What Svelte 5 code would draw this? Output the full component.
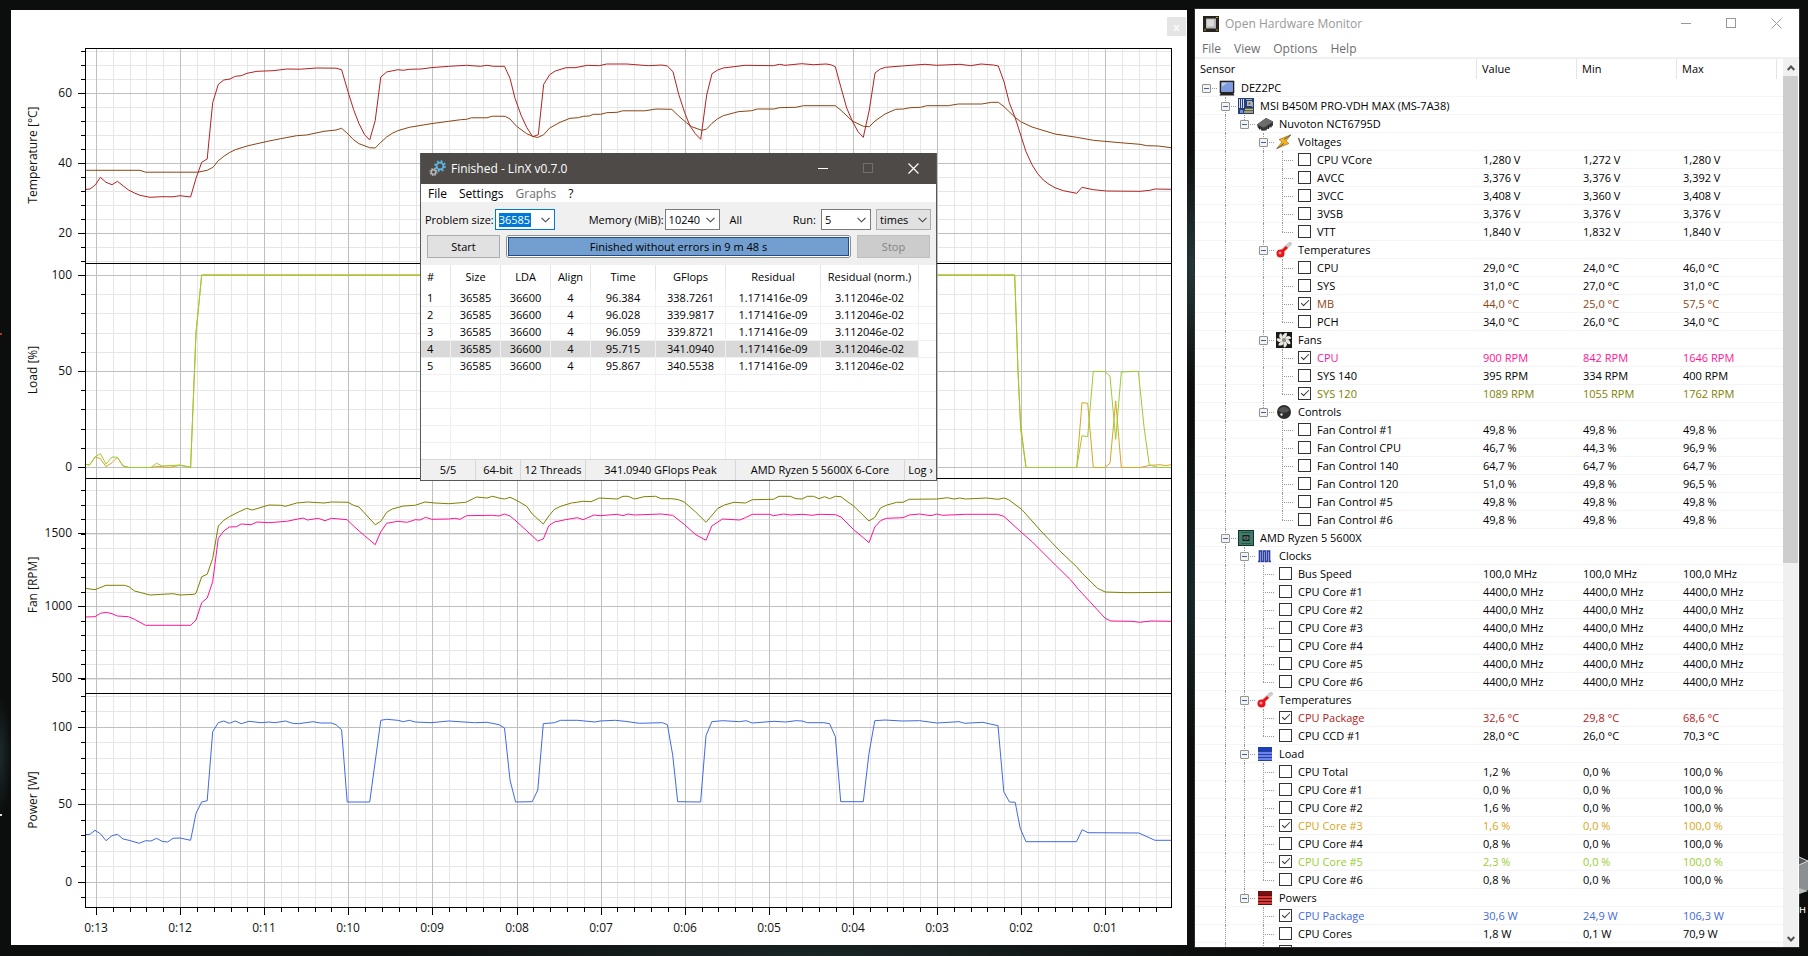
<script>
  let problemSize = $state("36585");
  let memory = $state("10240");
  let runs = $state("5");

  // ---- plot ----
  const left = 85;
  const right = 1171;

  const panels = [
    {
      label: "Temperature [°C]", mid: 155, top: 48, bottom: 263,
      ticks: [{ v: 60, y: 93 }, { v: 40, y: 163 }, { v: 20, y: 233 }],
      first: 51, step: 14,
      series: [
        { color: "#8b4513", points: "85,170.3 140,170.3 145.5,172.2 197.7,172.2 207.2,170.3 213,167.3 218.3,160.7 223.8,156.3 229.3,152.7 235.3,149.7 247,146 257,143.7 269,141 280.7,138.7 296.6,135.7 306.5,135 324,131.3 336,130 341.6,128.3 348,134 353.5,139.7 359,143.7 369.7,147.7 375.2,148 380.8,142.3 386.7,137 392.2,133.3 397.8,130.7 409.3,127.3 431,123.7 448.8,121.3 460.6,119.7 466.6,119.3 471.3,117.8 487,117.8 492.3,116.2 505.3,116.3 510,119 516.3,126 526.7,133.7 532.7,136.3 537.7,137.5 543.7,134.7 549.7,128 560,122.3 570,118.3 578.3,117.7 583.3,116.3 589.3,116 593.3,114.3 600.7,114.3 606.7,112.7 617.3,112.3 622.7,110.8 645,110.8 656,109 671.7,109.3 678.7,116 686.7,123 691.7,126.7 701.7,130.3 706.3,129.3 712,123.3 717.7,118.7 723.3,115.7 738.3,111.7 751.7,110.7 757.3,109 774,109 779.3,107.7 796,107.3 803.3,105.7 835.3,105.7 841,110.3 852.3,121 863.3,126.3 869.3,126.7 875,121 885,114 895.7,109.3 903.3,109 910,107.7 920.7,107.3 926.7,105.7 948.3,105.7 958.3,104 981.7,104 991.7,102.3 998.3,102.3 1004,106.7 1015,117.3 1020.7,121.7 1032,127 1055,134 1076.7,137.3 1093.3,140.3 1120,142.7 1140,144.3 1146.7,145.7 1158.3,146 1171,147.7" },
        { color: "#b22222", points: "85,189.5 90,189 95.3,185 100.4,177.3 106,182.3 112,184.7 117.4,181.3 128.5,190 134.5,193 140,195.3 150,197.3 162,196.7 173,196.8 180,195.7 190.6,197 196,178.3 201.7,162.3 207.2,159 210,130 212.7,102.7 218.3,84.3 223.8,80 230,79 235.3,76.3 241.2,75.7 247,73.3 257,71.3 273,70.7 286.7,69 300.5,69.2 316.3,68 336,68.2 341.6,69.7 348,91.7 353.5,109.3 359,123.7 364.6,134.7 369.7,140 375.2,120.7 380.8,77 386.7,72 397.8,69.7 403.3,70.3 409.3,69.3 421,69 431,67.7 448.8,66.3 466.6,65.3 480.4,66.3 487,65.3 493.5,66.3 504.5,66.3 510,78.3 515,98.3 521,115 526.7,127.3 532.7,136.7 538.3,134.7 543.7,84.3 549.7,74.7 555.3,71 566,67.7 575,67.7 587.3,65.3 599.3,65.7 606.7,64 626.7,64 648.3,65.7 661.7,65 667.3,66 673,71.7 678.7,94.3 684.7,112.7 690,126 695.3,133.7 700.7,139.3 706.7,95 712,73.7 717.7,70 723.3,68 745,65.3 773.3,65.7 779.3,64.3 785,65.3 801.7,63.7 813.3,64.7 826,64 830.7,64.7 835.3,66.7 841,87.7 846.7,108 852.3,121 858,131.7 863.3,137.3 869.3,110 875,73 880.3,69 885.7,67.3 901.7,66 925,64.3 936.7,65.3 960,64.3 970.7,65.7 981,64 993.3,65 998.3,66 1004,81.7 1009.3,102.7 1015,117.3 1020.7,135 1026,151.7 1032,164.7 1037.7,173.7 1043.3,180 1049,184.3 1055,187.7 1063.3,190.7 1076.7,193.3 1082,187.3 1093.3,189.7 1106.7,191 1140,191.3 1150,190.3 1155,189 1171,189.3" }
      ]
    },
    {
      label: "Load [%]", mid: 370, top: 263, bottom: 478,
      ticks: [{ v: 100, y: 275 }, { v: 50, y: 371 }, { v: 0, y: 467 }],
      first: 275, step: 19.2,
      series: [
        { color: "#daa520", points: "85,464.3 89.4,465 95.3,457 100.4,458.7 106,466.7 112,462.7 117.4,457.3 123,466 129,467.5 151,467.5 158,466.3 170,467.3 180,465.3 190.6,467.3 196,333 201.7,275 1014.7,275 1018,371 1020.7,425 1026,467.5 1076.7,467.5 1082,402.7 1087.7,403.3 1093.3,467.5 1105,467.5 1110,463.3 1115.7,401 1121.3,467.5 1140,467.5 1150,465.3 1160.7,464.7 1165.7,465.7 1171,464.7" },
        { color: "#9acd32", points: "85,464.3 89.4,465 95.3,456.7 100.4,453.7 106,464 112,457 117.4,457.3 123,466 129,467.5 151,467.5 156.6,463.3 162,466 180,465 190.6,467.3 196,333 201.7,275 1014.7,275 1018,371 1020.7,430 1026,467.5 1076.7,467.5 1082,435.7 1087.7,436.7 1093.3,371.3 1105,371.7 1110,376 1115.7,439.3 1121.3,372 1138.3,371.3 1144,426.7 1149.3,465 1158,467.3 1171,467.5" }
      ]
    },
    {
      label: "Fan [RPM]", mid: 585, top: 478, bottom: 693,
      ticks: [{ v: 1500, y: 533 }, { v: 1000, y: 606 }, { v: 500, y: 678 }],
      first: 490, step: 14.5,
      series: [
        { color: "#ff1493", points: "85,617 95,616.7 100.4,613.3 106,612.3 112,613.7 117.4,616 128.5,616.7 134.5,619.3 145.5,625.3 190.6,625.3 196,620 201.7,602.7 207.2,598 212.7,581.7 218.3,538.3 223.8,531 229.3,527 236.5,526.7 241.2,524 251,524.7 257,522 269,522.7 286.7,521.3 303,518 307.6,520 318.3,518.3 325,520.7 331.4,518.3 347.2,519.7 353.5,526 364.6,535.7 375.2,544.7 380.8,531.7 386.7,523.3 397.8,521.3 407.3,522.3 415.2,519.7 420,520 425.5,517.3 431.8,519.3 448.8,519 454.7,518.3 460,519.3 466.6,515.7 492.3,515.3 499,516 504.5,514 510,516 516,521 537.8,541 543.3,539 548.8,525.7 554.4,522 565.4,519.7 577.3,517.7 583.2,519.7 594,515 600,515.7 617.2,514.3 623,515.7 628,514 634.4,515 661.2,514 672.7,515.3 684.2,524.3 695.7,534.7 706,540.3 711.8,526 722.5,519 739.7,520 745.4,517.7 752.3,514.3 769.5,514.3 773.4,515.7 783.7,514 790.2,515 802,514.3 812.4,515.3 819,514.3 835.4,514.7 841,517 853.3,529.3 863.3,537.7 869,542.7 874.8,527 880.5,520.7 886.3,518.3 903,517.7 909.2,515 919.6,514 931,515.7 936.8,514 942.5,515.3 965.5,514.3 997.2,514.3 1003.8,516.3 1021,532 1032.4,542 1055.4,565 1070.7,580 1078.4,589.3 1089.9,601.7 1105.2,618.3 1111,621 1132,621.3 1139.6,622.3 1151,621 1171,621.3" },
        { color: "#808000", points: "85,588.3 95,589.7 106,585.3 124.5,585.3 129,586.7 134.5,591 150,595 173,593.7 180,595 194,594.3 196,593.3 201.7,576.7 207.2,574.3 212.7,558.3 218.3,526 223.8,520.3 229.3,516.7 239.2,511.7 246.7,508.3 252.3,510 269,505 280.7,505.3 285.5,506.3 296.6,503 307.6,502 324,503 331.4,502 348,502.3 353.5,505.3 359,507 375.2,524.7 380.8,521.3 386.7,512.3 392.2,509 403.3,506 415.2,505.3 425,502 435,503 448.8,503.7 465.8,502.3 476.5,497 487,498 492.7,496.3 499,498 504.5,499 510,497.3 516,500 526.7,506.3 532.2,514 543.3,524 548.8,516 554.4,509.3 560.7,506.3 571.4,503 583.2,501.3 591,501.7 599.4,498 617.2,499 623,496.3 628,496.3 634.4,499 644,496.7 655.5,496.3 661.2,498.7 672,498.7 678.5,499.7 684.2,502 695.7,512 706,522.3 717.9,508.3 724.4,505 734,502.3 745.4,503 752.3,499.7 773.4,499.3 779,496.3 790.2,496.3 796,498.7 802,499 807.4,496.3 813.5,496.3 819,498.7 824.6,496.7 829.6,498.7 835.4,496.3 841,496.7 846,500.7 853.3,505.7 869,521 874.8,517.3 880.5,508 886.3,505.3 896.6,502.3 903,502.3 909.2,499.3 936.8,499 947.5,497.7 954,499 959.7,498 965.5,499 986.5,498 998,499.3 1003.8,498 1008.7,499.7 1022,509.7 1040,530 1059.2,550.3 1076.5,566.7 1082.2,573.3 1097.5,588.3 1105.2,592 1128,592.7 1171,592.3" }
      ]
    },
    {
      label: "Power [W]", mid: 800, top: 693, bottom: 907,
      ticks: [{ v: 100, y: 727 }, { v: 50, y: 804 }, { v: 0, y: 882 }],
      first: 695.6, step: 15.5,
      series: [
        { color: "#4169e1", points: "85,834.7 90,834.3 95,830.3 100.4,833.7 106,840.7 112,835.7 117.4,834.3 123,839 129,840.3 139.2,843.3 145.5,840.7 151,841 156.6,838.3 162,841.3 167.7,842 173,838.3 180,838 190.6,840.3 196,813.3 201.7,802 207.2,800.7 212.7,731.7 218.3,722.7 223.8,721 229.3,723.3 235.3,721 241.2,723.7 249,721.3 261,722.7 269,722 274.8,722.7 285.5,721 292.6,723.3 298.5,723.7 313,721.7 320.3,723 331.4,723 336,724.7 341.6,729.7 347.2,802 369.7,802 380.8,720.3 386.7,719.3 397.8,720.3 403.3,721.7 409.3,720.3 415.2,722 431,722.7 448.8,721 474.5,722.7 487,722.3 499,724.7 504.5,728 510,780 515.6,802 532.2,801.7 537.8,790 543.3,723.7 554.4,722.7 560.7,720.3 577.3,720.3 595,722 600,721 615.3,720.3 624.9,721.3 639.4,723.3 662.4,722.7 667.4,724.7 672.7,755 677.7,801.7 700.6,802 706,735.7 711.8,721.7 722.5,720.7 739.7,721.7 746.2,720.7 752.3,723 774,721.3 785.6,722 796,720.7 802,721 807.4,722.7 823.9,722.7 829.6,723.7 835.4,736.7 840.7,801.7 863.3,801.7 869,753.3 874.8,720.7 885,720 902.3,721 919.6,720.7 936.8,723 959,721.7 964.7,723.3 982.7,722.3 998,725.7 1003.8,791.7 1009.5,802 1015.2,802.3 1020.2,828.3 1026,841.7 1076.5,841.7 1082.2,829.7 1088,832.7 1138.8,833 1155,840.3 1171,840.3" }
      ]
    }
  ];

  function minorLines(p) {
    const ys = [];
    for (let y = p.first; y < p.bottom; y += p.step) {
      ys.push(Math.round(y));
    }
    return ys;
  }

  // one major line per minute, five minor steps between two of them
  const columns = Array.from({ length: 64 }, (_, i) => ({
    x: Math.round(96 + (i * 84.1) / 5),
    major: i % 5 === 0,
    label: "0:" + String(13 - i / 5).padStart(2, "0")
  }));

  // ---- sensor tree ----
  const s = (name, value, min, max, color) => ({ name, value, min, max, color, leaf: true });
  const g = (name, icon, children) => ({ name, icon, children });

  const core = (n) => s("CPU Core #" + n, "4400,0 MHz", "4400,0 MHz", "4400,0 MHz");

  const tree = g("DEZ2PC", "computer", [
    g("MSI B450M PRO-VDH MAX (MS-7A38)", "board", [
      g("Nuvoton NCT6795D", "chip", [
        g("Voltages", "voltage", [
          s("CPU VCore", "1,280 V", "1,272 V", "1,280 V"),
          s("AVCC", "3,376 V", "3,376 V", "3,392 V"),
          s("3VCC", "3,408 V", "3,360 V", "3,408 V"),
          s("3VSB", "3,376 V", "3,376 V", "3,376 V"),
          s("VTT", "1,840 V", "1,832 V", "1,840 V")
        ]),
        g("Temperatures", "temperature", [
          s("CPU", "29,0 °C", "24,0 °C", "46,0 °C"),
          s("SYS", "31,0 °C", "27,0 °C", "31,0 °C"),
          s("MB", "44,0 °C", "25,0 °C", "57,5 °C", "#8b4513"),
          s("PCH", "34,0 °C", "26,0 °C", "34,0 °C")
        ]),
        g("Fans", "fan", [
          s("CPU", "900 RPM", "842 RPM", "1646 RPM", "#ff1493"),
          s("SYS 140", "395 RPM", "334 RPM", "400 RPM"),
          s("SYS 120", "1089 RPM", "1055 RPM", "1762 RPM", "#808000")
        ]),
        g("Controls", "control", [
          s("Fan Control #1", "49,8 %", "49,8 %", "49,8 %"),
          s("Fan Control CPU", "46,7 %", "44,3 %", "96,9 %"),
          s("Fan Control 140", "64,7 %", "64,7 %", "64,7 %"),
          s("Fan Control 120", "51,0 %", "49,8 %", "96,5 %"),
          s("Fan Control #5", "49,8 %", "49,8 %", "49,8 %"),
          s("Fan Control #6", "49,8 %", "49,8 %", "49,8 %")
        ])
      ])
    ]),
    g("AMD Ryzen 5 5600X", "cpu", [
      g("Clocks", "clock", [
        s("Bus Speed", "100,0 MHz", "100,0 MHz", "100,0 MHz"),
        core(1), core(2), core(3), core(4), core(5), core(6)
      ]),
      g("Temperatures", "temperature", [
        s("CPU Package", "32,6 °C", "29,8 °C", "68,6 °C", "#b22222"),
        s("CPU CCD #1", "28,0 °C", "26,0 °C", "70,3 °C")
      ]),
      g("Load", "load", [
        s("CPU Total", "1,2 %", "0,0 %", "100,0 %"),
        s("CPU Core #1", "0,0 %", "0,0 %", "100,0 %"),
        s("CPU Core #2", "1,6 %", "0,0 %", "100,0 %"),
        s("CPU Core #3", "1,6 %", "0,0 %", "100,0 %", "#daa520"),
        s("CPU Core #4", "0,8 %", "0,0 %", "100,0 %"),
        s("CPU Core #5", "2,3 %", "0,0 %", "100,0 %", "#9acd32"),
        s("CPU Core #6", "0,8 %", "0,0 %", "100,0 %")
      ]),
      g("Powers", "power", [
        s("CPU Package", "30,6 W", "24,9 W", "106,3 W", "#4169e1"),
        s("CPU Cores", "1,8 W", "0,1 W", "70,9 W"),
        s("", "", "", "")
      ])
    ]),
    null
  ]);

  // guides: one entry per level, "line", "end" or ""
  function flatten(node, parents = [], own = "") {
    const row = { ...node, guides: [...parents, own] };
    const below = [...parents, own === "line" ? "line" : ""];
    const kids = node.children ?? [];
    return [
      row,
      ...kids.flatMap((kid, i) =>
        kid ? flatten(kid, below, i === kids.length - 1 ? "end" : "line") : []
      )
    ];
  }

  const rows = flatten(tree);

  // ---- LinX ----
  const results = [
    [1, "36585", "36600", 4, "96.384", "338.7261", "1.171416e-09", "3.112046e-02"],
    [2, "36585", "36600", 4, "96.028", "339.9817", "1.171416e-09", "3.112046e-02"],
    [3, "36585", "36600", 4, "96.059", "339.8721", "1.171416e-09", "3.112046e-02"],
    [4, "36585", "36600", 4, "95.715", "341.0940", "1.171416e-09", "3.112046e-02"],
    [5, "36585", "36600", 4, "95.867", "340.5538", "1.171416e-09", "3.112046e-02"]
  ];
  const headings = ["#", "Size", "LDA", "Align", "Time", "GFlops", "Residual", "Residual (norm.)"];
</script>

{#snippet chevron()}
  <svg width="9" height="6" viewBox="0 0 9 6"><path d="M.5 .8 4.5 4.8 8.5 .8" fill="none" stroke="#444" stroke-width="1.1" /></svg>
{/snippet}

{#snippet icon(name)}
  <svg class="icon" width="16" height="16" viewBox="0 0 16 16" aria-hidden="true">
    {#if name === "computer"}
      <rect x="1.5" y="1.5" width="13" height="11" fill="#b8ccf0" stroke="#222" stroke-width="1.6" />
      <path d="M2.5 11.5V7L9 2.5h4.5v9z" fill="#7c9be0" />
      <path d="M2 12.5h12l1.5 3H.5z" fill="#222" />
    {:else if name === "board"}
      <rect width="16" height="16" fill="#263f7c" />
      <path d="M1.5 1v9M3.5 1v9M5.5 1v9" stroke="#d5dbe8" />
      <rect x="9" y="3" width="5" height="5" fill="#b9bba8" />
      <rect x="10.5" y="4.5" width="2" height="2" fill="#666" />
      <path d="M8 1.5h6M14.5 4v5" stroke="#9ab" />
      <path d="M7 11.5h8M6 14h9" stroke="#d8c24c" stroke-width="1.3" />
      <path d="M2 12h3v3H2z" fill="#8292b5" />
    {:else if name === "chip"}
      <path d="M0 8.5 9 2 16 5.5V9.500L7 15 1 12z" fill="#3d3d3d" />
      <path d="M0 8.500 9 2 16 5.500 7 11.500z" fill="#6c6c6c" />
      <path d="M2.500 10.500v3M5 12v3M9 11.500v3M11.500 10v3M14 8.500v3" stroke="#222" />
    {:else if name === "voltage"}
      <path d="M14.5 1 3 5.500 6 8 .8 14.500 13 9.500 10 7z" fill="#f5b31c" stroke="#96702a" stroke-width=".7" />
      <path d="M15 .8 8 5.500M.8 14.800 8 9.500" fill="none" stroke="#555" stroke-width=".9" />
    {:else if name === "temperature"}
      <path d="M6 9 14 1.800" stroke="#ccc" stroke-width="4" stroke-linecap="round" />
      <path d="M5 10.500 11 5" stroke="#e11" stroke-width="3" />
      <circle cx="4.500" cy="11.500" r="4" fill="#e8141c" />
      <path d="M4 9.500v3M2.500 11h3" stroke="#fbb" stroke-width="1" />
    {:else if name === "fan"}
      <rect width="16" height="16" fill="#1c1a18" />
      {#each [0, 51, 103, 154, 206, 257, 309] as a}
        <path d="M7.500 6.500C6 4 7 1.500 10.500.8 12 2.500 10 4.500 8.800 6.800z" fill="#e9e9e2" transform="rotate({a} 8 8)" />
      {/each}
      <circle cx="8" cy="8" r="2" fill="#8d8f88" />
    {:else if name === "control"}
      <circle cx="8" cy="8" r="7" fill="#2e2e2e" />
      <path d="M2.500 6.500a6 6 0 0 1 11 0 8 8 0 0 1-11 0z" fill="#555" />
      <circle cx="5.500" cy="10.500" r="1.200" fill="#ddd" />
    {:else if name === "cpu"}
      <rect x=".5" y=".5" width="15" height="15" fill="#3f7d6b" stroke="#16302a" />
      <rect x="4.500" y="5" width="7" height="6" fill="#1b1b1b" />
      <rect x="6" y="7" width="4" height="2" fill="none" stroke="#7fa59a" stroke-width=".8" />
      <path d="M3 2.500h10M3 13.500h10" stroke="#27594b" />
    {:else if name === "clock"}
      <path d="M1 2h13v12H1z" fill="#dfe4fb" />
      <path d="M1 13.500h1.500V3h2v10.500h2V3h2v10.500h2V3h2v10.500H14" fill="none" stroke="#2f3f9e" stroke-width="1.500" />
    {:else if name === "load"}
      <rect x="1" y="1" width="14" height="14" fill="#6a83ee" />
      <rect x="1" y="1" width="14" height="4" fill="#1b3fb4" />
      <path d="M1 5.5h14M1 8.5h14M1 11.5h14M1 14.5h14" stroke="#2a3f96" />
    {:else if name === "power"}
      <rect x="1" y="1" width="14" height="14" fill="#d83a3a" />
      <rect x="1" y="1" width="14" height="4" fill="#7a0d0d" />
      <path d="M1 5.5h14M1 8.5h14M1 11.5h14M1 14.5h14" stroke="#5c1010" />
    {/if}
  </svg>
{/snippet}

<div class="desktop">
  <span class="speck orange"></span>
  <span class="speck white"></span>

  <main class="plot-window">
    <svg class="plot" viewBox="11 10 1176 935">
      {#each panels as p}
        {#each minorLines(p) as y}
          <path d="M{left} {y + 0.5}H{right}" class="minor" />
          <path d="M{left - 4} {y + 0.5}H{left}" class="axis" />
        {/each}
      {/each}
      {#each columns as c}
        <path d="M{c.x + 0.5} 48V907" class="minor" />
      {/each}
      {#each panels as p}
        {#each p.ticks as t}
          <path d="M{left} {t.y + 0.5}H{right}" class="major" />
        {/each}
      {/each}
      {#each columns as c}
        {#if c.major}
          <path d="M{c.x + 0.5} 48V907" class="major" />
          <path d="M{c.x + 0.5} 907V915" class="axis" />
          <text x={c.x} y="932" text-anchor="middle">{c.label}</text>
        {:else}
          <path d="M{c.x + 0.5} 907V912" class="axis" />
        {/if}
      {/each}
      {#each panels as p}
        {#each p.series as line}
          <polyline points={line.points} stroke={line.color} />
        {/each}
        {#each p.ticks as t}
          <path d="M{left - 7} {t.y + 0.5}H{left}" class="axis" />
          <text x="72" y={t.y + 4} text-anchor="end">{t.v}</text>
        {/each}
        <rect x={left + 0.5} y={p.top + 0.5} width={right - left} height={p.bottom - p.top} class="frame" />
        <text transform="translate(37 {p.mid}) rotate(-90)" text-anchor="middle">{p.label}</text>
      {/each}
    </svg>
    <button class="plot-close" aria-label="Close plot">x</button>
  </main>

  <section class="monitor">
    <header class="caption">
      <svg width="16" height="16" viewBox="0 0 16 16" aria-hidden="true">
        <rect width="16" height="16" fill="#26231f" />
        <rect x="3" y="2.5" width="10" height="10" fill="#b5b5b5" />
        <rect x="4" y="3.5" width="7" height="7" fill="#dadada" />
        <path d="M1 14h2M13 14h2M13 1.5h2" stroke="#b59a28" />
      </svg>
      <h1>Open Hardware Monitor</h1>
      <div class="caption-buttons">
        <button aria-label="Minimize"><svg width="11" height="11" viewBox="0 0 11 11"><path d="M0 5.5h10" stroke="#999" /></svg></button>
        <button aria-label="Maximize"><svg width="11" height="11" viewBox="0 0 11 11"><rect x=".5" y=".5" width="9" height="9" fill="none" stroke="#999" /></svg></button>
        <button aria-label="Close"><svg width="11" height="11" viewBox="0 0 11 11"><path d="M.5.5l10 10M10.5.5l-10 10" stroke="#999" /></svg></button>
      </div>
    </header>
    <nav class="menu">
      <button>File</button>
      <button>View</button>
      <button>Options</button>
      <button>Help</button>
    </nav>
    <div class="body">
      <div class="list">
        <table class="sensors">
          <colgroup>
            <col /><col class="num" /><col class="num" /><col class="num" /><col class="rest" />
          </colgroup>
          <thead>
            <tr><th>Sensor</th><th>Value</th><th>Min</th><th>Max</th><th></th></tr>
          </thead>
          <tbody>
            {#each rows as row, i}
              <tr style:color={row.color}>
                <td>
                  <div class="node">
                    {#each row.guides as guide, level}
                      <span class="guide {guide}" class:own={level === row.guides.length - 1}>
                        {#if !row.leaf && level === row.guides.length - 1}
                          <button class="expander" aria-label="Collapse {row.name}"></button>
                        {/if}
                      </span>
                    {/each}
                    {#if row.leaf}
                      <input type="checkbox" id="sensor-{i}" checked={!!row.color} />
                      <label for="sensor-{i}">{row.name}</label>
                    {:else}
                      {@render icon(row.icon)}
                      <span class="group">{row.name}</span>
                    {/if}
                  </div>
                </td>
                <td>{row.value ?? ""}</td>
                <td>{row.min ?? ""}</td>
                <td>{row.max ?? ""}</td>
                <td></td>
              </tr>
            {/each}
          </tbody>
        </table>
      </div>
      <div class="scrollbar">
        <button aria-label="Scroll up"><svg width="8" height="6" viewBox="0 0 8 6"><path d="M.7 5 4 1.5 7.3 5" fill="none" stroke="#505050" stroke-width="2" /></svg></button>
        <div class="track"><div class="thumb"></div></div>
        <button aria-label="Scroll down"><svg width="8" height="6" viewBox="0 0 8 6"><path d="M.7 1 4 4.5 7.3 1" fill="none" stroke="#505050" stroke-width="2" /></svg></button>
      </div>
    </div>
  </section>

  <section class="linx">
    <header class="linx-caption">
      <svg width="17" height="17" viewBox="0 0 17 17" fill="none" aria-hidden="true">
        <circle cx="11" cy="6" r="3.4" stroke="#5db8e8" stroke-width="1.8" />
        <circle cx="11" cy="6" r="5" stroke="#5db8e8" stroke-width="1.6" stroke-dasharray="2 1.93" />
        <circle cx="4.5" cy="12" r="2.2" stroke="#b8b8b8" stroke-width="1.4" />
        <circle cx="4.5" cy="12" r="3.5" stroke="#b8b8b8" stroke-width="1.2" stroke-dasharray="1.5 1.25" />
      </svg>
      <h2>Finished - LinX v0.7.0</h2>
      <div class="caption-buttons">
        <button aria-label="Minimize"><svg width="11" height="11" viewBox="0 0 11 11"><path d="M0 5.5h10" stroke="#fff" /></svg></button>
        <button aria-label="Maximize" disabled><svg width="11" height="11" viewBox="0 0 11 11"><rect x=".5" y=".5" width="9" height="9" fill="none" stroke="#716f6d" /></svg></button>
        <button aria-label="Close"><svg width="11" height="11" viewBox="0 0 11 11"><path d="M.5.5l10 10M10.5.5l-10 10" stroke="#fff" stroke-width="1.2" /></svg></button>
      </div>
    </header>
    <nav class="linx-menu">
      <button>File</button>
      <button>Settings</button>
      <button disabled>Graphs</button>
      <button>?</button>
    </nav>

    <div class="tools">
      <label for="size">Problem size:</label>
      <span class="combo focused size"><input id="size" bind:value={problemSize} /><button aria-label="Problem sizes">{@render chevron()}</button></span>
      <label for="memory" class="memory">Memory (MiB):</label>
      <span class="combo mem"><input id="memory" bind:value={memory} /><button aria-label="Memory sizes">{@render chevron()}</button></span>
      <span class="all">All</span>
      <label for="runs" class="runs">Run:</label>
      <span class="combo run"><input id="runs" bind:value={runs} /><button aria-label="Run counts">{@render chevron()}</button></span>
      <span class="unit">
        <select aria-label="Run unit"><option>times</option></select>
        {@render chevron()}
      </span>
    </div>
    <div class="actions">
      <button>Start</button>
      <div class="progress" role="progressbar" aria-valuenow="100"><span>Finished without errors in 9 m 48 s</span></div>
      <button disabled>Stop</button>
    </div>

    <div class="results">
      <table>
        <colgroup>
          <col class="c30" /><col class="c50" /><col class="c50" /><col class="c40" /><col class="c65" /><col class="c70" /><col class="c95" /><col class="c98" /><col />
        </colgroup>
        <thead>
          <tr>{#each headings as h}<th>{h}</th>{/each}<th></th></tr>
        </thead>
        <tbody>
          {#each results as r}
            <tr class:selected={r[0] === 4}>{#each r as cell}<td>{cell}</td>{/each}<td></td></tr>
          {/each}
          {#each Array(5) as _}
            <tr>{#each Array(9) as _}<td></td>{/each}</tr>
          {/each}
        </tbody>
      </table>
    </div>

    <footer class="status">
      <span>5/5</span>
      <span>64-bit</span>
      <span>12 Threads</span>
      <span>341.0940 GFlops Peak</span>
      <span>AMD Ryzen 5 5600X 6-Core</span>
      <span>Log ›</span>
    </footer>
  </section>

  <div class="shortcut">
    <svg width="9" height="39" viewBox="0 0 9 39" aria-hidden="true">
      <path d="M0 1 9 5v29L0 38z" fill="#8b8f92" />
      <path d="M0 1 9 5 0 9z" fill="#55595c" />
      <path d="M0 1 9 5M0 9 9 5" stroke="#d6d8da" fill="none" />
      <path d="M0 32 9 35 0 38z" fill="#b9bdbf" />
    </svg>
    <span>н</span>
  </div>
</div>

<style>
  :global(body) {
    margin: 0;
    background: #0c0d0d;
  }

  .desktop {
    position: relative;
    display: grid;
    grid-template-columns: 1176fr 604fr;
    gap: 8px;
    height: 100vh;
    box-sizing: border-box;
    padding: 0 9px 0 11px;
    overflow: hidden;
    font-family: "Open Sans", "Noto Sans", sans-serif;
    font-size: 11px;
    color: #000;
    background:
      radial-gradient(ellipse 30px 120px at 66% 28%, #24383a, transparent),
      radial-gradient(ellipse 20px 160px at 66% 62%, #16282a, transparent),
      radial-gradient(ellipse 420px 30px at 45% 100%, #1a2626, transparent),
      radial-gradient(ellipse 12px 60px at 0 79%, #1c2a2c, transparent),
      #0c0d0d;
  }

  button {
    font: inherit;
    color: inherit;
    margin: 0;
    padding: 0;
    border: 0;
    background: none;
  }

  .speck {
    position: absolute;
    left: 0;
    width: 2px;
    height: 2px;
  }

  .orange {
    top: 333px;
    background: #a8401c;
  }

  .white {
    top: 814px;
    background: #ddd;
  }

  /* plot */
  .plot-window {
    position: relative;
    margin: 10px 0 11px;
    background: #fff;
    min-height: 0;
  }

  .plot {
    display: block;
    width: 100%;
    height: 100%;
  }

  .plot path,
  .frame {
    fill: none;
    stroke-width: 1;
    shape-rendering: crispEdges;
  }

  .plot .minor {
    stroke: #e6e6e6;
  }

  .plot .major {
    stroke: #bfbfbf;
  }

  .plot .axis,
  .frame {
    stroke: #000;
  }

  .plot polyline {
    fill: none;
    stroke-width: 1;
  }

  .plot text {
    font-size: 12px;
    fill: #111;
  }

  .plot-close {
    position: absolute;
    top: 7px;
    right: 1px;
    width: 19px;
    height: 19px;
    background: #e5e5e5;
    color: #fafafa;
    font-weight: bold;
    line-height: 17px;
  }

  /* sensor window */
  .monitor {
    display: flex;
    flex-direction: column;
    margin: 9px 0;
    background: #fff;
    min-height: 0;
    min-width: 0;
    outline: 1px solid #2b2b2b;
  }

  .caption {
    display: flex;
    align-items: center;
    height: 29px;
    padding-left: 8px;
  }

  .caption h1 {
    margin: 0 auto 0 6px;
    font-size: 12px;
    font-weight: normal;
    color: #999;
  }

  .caption-buttons {
    display: flex;
  }

  .caption-buttons button {
    display: flex;
    align-items: center;
    justify-content: center;
    width: 45px;
    height: 29px;
  }

  .menu {
    display: flex;
    gap: 13px;
    height: 19px;
    padding-left: 7px;
    border-bottom: 2px solid #f0f0f0;
    font-size: 12px;
    line-height: 21px;
    color: #6d6d6d;
  }

  .menu button,
  .linx-menu button {
    line-height: inherit;
  }

  .body {
    display: flex;
    flex: 1;
    min-height: 0;
    padding-right: 1px;
  }

  .list {
    flex: 1;
    min-width: 0;
    overflow: hidden;
  }

  table {
    width: 100%;
    table-layout: fixed;
    border-collapse: separate;
    border-spacing: 0;
  }

  th,
  td {
    box-sizing: border-box;
    padding: 0;
    font-weight: normal;
    white-space: nowrap;
  }

  .num {
    width: 100px;
  }

  .rest {
    width: 6px;
  }

  .sensors th {
    height: 20px;
    padding: 0 0 2px 5px;
    border-right: 1px solid #e5e5e5;
    text-align: left;
  }

  .sensors th:last-child {
    border: 0;
  }

  .sensors td {
    height: 18px;
    padding-left: 6px;
    border-bottom: 1px solid #f5f5f5;
    line-height: 17px;
  }

  .sensors td:first-child {
    padding-left: 2px;
  }

  .node {
    display: flex;
    align-items: center;
    height: 17px;
  }

  .guide {
    position: relative;
    flex: none;
    width: 19px;
    height: 18px;
  }

  .guide.line::before,
  .guide.end::before {
    content: "";
    position: absolute;
    left: 9px;
    top: 0;
    height: 18px;
    border-left: 1px dotted #999;
  }

  .guide.end::before {
    height: 9px;
  }

  .own::after {
    content: "";
    position: absolute;
    left: 9px;
    top: 9px;
    width: 11px;
    border-top: 1px dotted #999;
  }

  .expander {
    position: absolute;
    z-index: 1;
    left: 5px;
    top: 5px;
    width: 9px;
    height: 9px;
    border: 1px solid #919191;
    border-radius: 1px;
    background: linear-gradient(#3f5f9f, #3f5f9f) center / 5px 1px no-repeat, #f4f4f4;
  }

  .icon {
    flex: none;
    margin: 0 6px 0 3px;
  }

  .node input {
    appearance: none;
    flex: none;
    width: 13px;
    height: 13px;
    margin: 0 6px 0 6px;
    border: 1px solid #333;
    background: #fff;
  }

  .node input:checked::before {
    content: "";
    display: block;
    width: 7px;
    height: 3px;
    margin: 2px 0 0 2px;
    border: solid #333;
    border-width: 0 0 1px 1px;
    transform: rotate(-45deg);
  }

  .scrollbar {
    display: flex;
    flex-direction: column;
    width: 15px;
    background: #f0f0f0;
  }

  .scrollbar button {
    display: flex;
    align-items: center;
    justify-content: center;
    height: 17px;
  }

  .track {
    flex: 1;
  }

  .thumb {
    height: 57%;
    background: #cdcdcd;
  }

  /* LinX window */
  .linx {
    position: absolute;
    left: 420px;
    top: 153px;
    display: flex;
    flex-direction: column;
    width: 515px;
    border: 1px solid #57585a;
    border-top: 0;
    background: #f0f0f0;
  }

  .linx-caption {
    display: flex;
    align-items: center;
    height: 31px;
    padding-left: 8px;
    background: #4d4a48;
    color: #fff;
  }

  .linx-caption h2 {
    margin: 0 auto 0 5px;
    font-size: 12px;
    font-weight: normal;
  }

  .linx-menu {
    display: flex;
    gap: 12px;
    height: 18px;
    padding-left: 7px;
    background: #fff;
    font-size: 12px;
    line-height: 19px;
  }

  .linx-menu button:disabled {
    color: #6d6d6d;
  }

  .tools {
    display: flex;
    align-items: center;
    height: 21px;
    padding: 7px 5px 5px 4px;
  }

  .tools label {
    margin-right: 1px;
  }

  .tools .memory {
    margin-left: 34px;
  }

  .tools .runs {
    margin-left: auto;
    margin-right: 5px;
  }

  .combo {
    display: flex;
    align-items: center;
    justify-content: space-between;
    box-sizing: border-box;
    height: 21px;
    padding: 0 4px 0 3px;
    border: 1px solid #7a7a7a;
    background: #fff;
  }

  .combo input {
    box-sizing: border-box;
    width: 32px;
    height: 14px;
    padding: 0;
    border: 0;
    font: inherit;
    background: none;
    outline: none;
  }

  .combo button {
    display: flex;
  }

  .focused {
    border-color: #0078d7;
  }

  .focused input {
    color: #fff;
    background: #0078d7;
  }

  .size {
    width: 60px;
  }

  .mem {
    width: 55px;
  }

  .run {
    width: 50px;
  }

  .run input {
    width: 24px;
  }

  .all {
    margin-left: 10px;
  }

  .unit {
    display: grid;
    align-items: center;
    margin-left: 5px;
  }

  .unit > :global(*) {
    grid-area: 1 / 1;
  }

  .unit > :global(svg) {
    justify-self: end;
    margin-right: 4px;
    pointer-events: none;
  }

  .unit select {
    appearance: none;
    width: 55px;
    height: 21px;
    padding: 0 3px;
    border: 1px solid #adadad;
    border-radius: 0;
    font: inherit;
    color: #000;
    background: #e1e1e1;
  }

  .actions {
    display: flex;
    gap: 6px;
    height: 23px;
    padding: 0 6px 7px 6px;
  }

  .actions button {
    width: 73px;
    border: 1px solid #adadad;
    background: #e1e1e1;
  }

  .actions button:disabled {
    border-color: #bfbfbf;
    background: #ccc;
    color: #838383;
  }

  .progress {
    flex: 1;
    box-sizing: border-box;
    padding: 1px;
    border: 1px solid #8c8c8c;
    border-radius: 3px;
    background: #fff;
  }

  .progress span {
    display: block;
    box-sizing: border-box;
    height: 100%;
    border: 1px solid #1f4a85;
    background: #729fcf;
    text-align: center;
    line-height: 17px;
  }

  .results {
    height: 194px;
    overflow: hidden;
    background: #fff;
  }

  .c30 { width: 30px; }
  .c40 { width: 40px; }
  .c50 { width: 50px; }
  .c65 { width: 65px; }
  .c70 { width: 70px; }
  .c95 { width: 95px; }
  .c98 { width: 98px; }

  .results th {
    height: 25px;
    padding-bottom: 2px;
    border-right: 1px solid #e5e5e5;
  }

  .results td {
    height: 17px;
    border-right: 1px solid #f0f0f0;
    border-bottom: 1px solid #f0f0f0;
    text-align: center;
    line-height: 16px;
  }

  .results th:first-child,
  .results td:first-child {
    padding-left: 6px;
    text-align: left;
  }

  .results th:last-child,
  .results td:last-child {
    border-right: 0;
  }

  .selected td:not(:last-child) {
    background: #d9d9d9;
  }

  .status {
    display: grid;
    grid-template-columns: 55px 45px 65px 150px 1fr 31px;
    height: 20px;
    border-top: 1px solid #d7d7d7;
    line-height: 20px;
    text-align: center;
    white-space: nowrap;
  }

  .status span:not(:last-child) {
    border-right: 1px solid #d7d7d7;
    margin-bottom: 1px;
  }

  .shortcut {
    position: absolute;
    right: 0;
    top: 856px;
    width: 9px;
    color: #fff;
  }

  .shortcut svg {
    display: block;
  }

  .shortcut span {
    display: block;
    margin-top: 6px;
    line-height: 16px;
  }
</style>
